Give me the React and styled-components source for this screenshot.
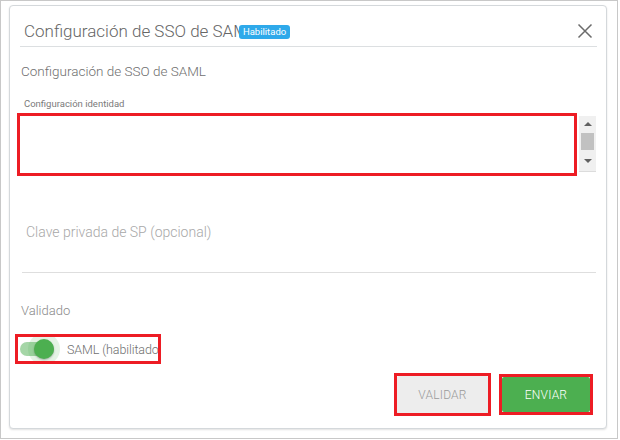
import styled, { createGlobalStyle } from "styled-components";

const Global = createGlobalStyle`
  body {
    margin: 0;
    background: #fff;
    font-family: Roboto, "Liberation Sans", Arial, sans-serif;
  }
`

const Frame = styled.div`
  box-sizing: border-box;
  width: 618px;
  height: 439px;
  border: 1px solid #c8c8c8;
  padding: 4px 10px 0 8px;
`

const Card = styled.div`
  box-sizing: border-box;
  height: 424px;
  border: 1px solid #d4d8db;
  border-radius: 4px;
  box-shadow: 0 1px 2px rgba(0, 0, 0, 0.12);
  background: #fff;
`

const Header = styled.div`
  display: flex;
  align-items: center;
  height: 30px;
  padding: 10px 13px 0 14px;
`

const Title = styled.h2`
  margin: 0;
  font-size: 17px;
  font-weight: 300;
  color: #666;
  white-space: nowrap;
`

const Badge = styled.span`
  display: inline-block;
  margin-left: -18px;
  padding: 0 4px;
  height: 14px;
  line-height: 14px;
  border-radius: 3px;
  background: #2ea9ea;
  color: #fff;
  font-size: 9.5px;
  font-weight: 400;
  vertical-align: 2px;
`

const Close = styled.button`
  margin-left: auto;
  width: 16px;
  height: 16px;
  padding: 0;
  border: none;
  background: none;
  display: flex;
`

const Divider = styled.div`
  height: 1px;
  background: #dcdfe1;
  margin: 0 9px 0 10px;
`

const Body = styled.div`
  padding: 0 9px 0 10px;
`

const SectionTitle = styled.h3`
  margin: 16px 0 0 1px;
  font-size: 13.5px;
  line-height: 16px;
  font-weight: 300;
  color: #6f6f6f;
`

const SmallLabel = styled.div`
  margin: 19px 0 0 4px;
  font-size: 9.5px;
  line-height: 12px;
  color: #7a7a7a;
`

const FieldRow = styled.div`
  display: flex;
  align-items: flex-start;
  gap: 2px;
  margin-top: 3px;
`

const Highlight = styled.div`
  box-sizing: border-box;
  flex-shrink: 0;
  border: 3px solid #ed1c24;
  width: ${p => p.$w}px;
  height: ${p => p.$h}px;
  margin-left: ${p => p.$ml || 0}px;
  overflow: hidden;
`

const Scrollbar = styled.div`
  box-sizing: border-box;
  margin-top: 3px;
  width: 17px;
  height: 56px;
  background: #f0f0f0;
  border-bottom: 1px solid #dcdcdc;
  display: flex;
  flex-direction: column;
  align-items: center;
  padding-top: 6px;
`

const Arrow = styled.div`
  width: 0;
  height: 0;
  border-left: 4px solid transparent;
  border-right: 4px solid transparent;
  ${p => p.$down ? "border-top: 4px solid #606060;" : "border-bottom: 4px solid #606060;"}
`

const Thumb = styled.div`
  width: 13px;
  height: 17px;
  background: #c1c1c1;
  margin: 7px 0 9px;
`

const TextField = styled.div`
  margin: 0 1px 0 2px;
  padding: 47px 0 31px 4px;
  border-bottom: 1px solid #dedede;
  font-size: 14px;
  line-height: 18px;
  font-weight: 300;
  color: #a8a8a8;
`

const Validado = styled.div`
  margin: 30px 0 0 1px;
  font-size: 13px;
  line-height: 16px;
  font-weight: 300;
  color: #8a8a8a;
`

const ToggleRow = styled.div`
  display: flex;
  align-items: center;
  height: 100%;
  white-space: nowrap;
`

const Switch = styled.div`
  position: relative;
  flex-shrink: 0;
  margin-left: 2px;
  width: 34px;
  height: 14px;
  border-radius: 7px;
  background: #a5d6a7;
`

const Knob = styled.div`
  position: absolute;
  left: 14px;
  top: -3px;
  width: 20px;
  height: 20px;
  border-radius: 50%;
  background: #4caf50;
  box-shadow: 0 0 0 6px rgba(76, 175, 80, 0.15), 0 1px 2px rgba(0, 0, 0, 0.3);
`

const ToggleLabel = styled.span`
  margin-left: 13px;
  font-size: 12.5px;
  letter-spacing: -0.1px;
  font-weight: 300;
  color: #6f6f6f;
`

const Actions = styled.div`
  display: flex;
  justify-content: flex-end;
  align-items: center;
  gap: 8px;
  margin: 9px 4px 0 0;
`

const Button = styled.button`
  width: 100%;
  height: 100%;
  border: none;
  border-radius: 2px;
  font-family: inherit;
  font-size: 12px;
  font-weight: 300;
  letter-spacing: 0.2px;
  background: ${p => p.$primary ? "#4caf50" : "#ededed"};
  color: ${p => p.$primary ? "#fff" : "#9a9a9a"};
  box-shadow: ${p => p.$primary ? "none" : "0 1px 1px rgba(0,0,0,0.15)"};
`

export default function App() {
  return (
    <Frame>
      <Global />
      <Card>
        <Header>
          <Title>
            Configuración de SSO de SAML<Badge>Habilitado</Badge>
          </Title>
          <Close aria-label="Cerrar">
            <svg width="16" height="16" viewBox="0 0 16 16">
              <path d="M1.5 1.5 L14.5 14.5 M14.5 1.5 L1.5 14.5" stroke="#6b6b6b" strokeWidth="1.5" fill="none" />
            </svg>
          </Close>
        </Header>
        <Divider />
        <Body>
          <SectionTitle>Configuración de SSO de SAML</SectionTitle>
          <SmallLabel>Configuración identidad</SmallLabel>
          <FieldRow>
            <Highlight $w={560} $h={63} $ml={-3} />
            <Scrollbar>
              <Arrow />
              <Thumb />
              <Arrow $down />
            </Scrollbar>
          </FieldRow>
          <TextField>Clave privada de SP (opcional)</TextField>
          <Validado>Validado</Validado>
          <Highlight $w={146} $h={30} $ml={-5} style={{ marginTop: 15 }}>
            <ToggleRow>
              <Switch>
                <Knob />
              </Switch>
              <ToggleLabel>SAML (habilitado)</ToggleLabel>
            </ToggleRow>
          </Highlight>
          <Actions>
            <Highlight $w={97} $h={43}>
              <Button>VALIDAR</Button>
            </Highlight>
            <Highlight $w={94} $h={41}>
              <Button $primary>ENVIAR</Button>
            </Highlight>
          </Actions>
        </Body>
      </Card>
    </Frame>
  );
}
